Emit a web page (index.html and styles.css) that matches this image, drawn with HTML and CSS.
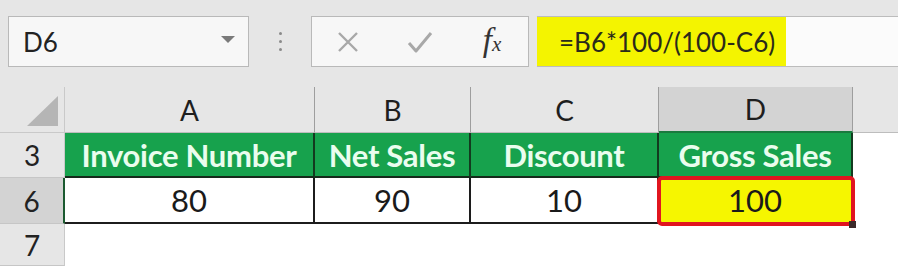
FILE: index.html
```html
<!DOCTYPE html>
<html lang="en">
<head>
  <meta charset="UTF-8">
  <title>Gross Sales</title>
  <link rel="stylesheet" href="styles.css">
</head>
<body>

<div class="toolbar">
  <div class="name-box">
    <span>D6</span>
    <svg class="caret" width="14" height="8" viewBox="0 0 14 8"><path d="M0 0 H14 L7 7 Z" fill="#7a7a7a"/></svg>
  </div>
  <div class="dots"><i></i><i></i><i></i></div>
  <div class="fx-box">
    <div class="fx-slot">
      <svg width="22" height="20" viewBox="0 0 22 20"><path d="M2 1 L20 19 M20 1 L2 19" stroke="#a8a8a8" stroke-width="2.4" fill="none"/></svg>
    </div>
    <div class="fx-slot">
      <svg width="26" height="22" viewBox="0 0 26 22"><path d="M2 12 L9 20 L24 2" stroke="#a8a8a8" stroke-width="3" fill="none" stroke-linejoin="round"/></svg>
    </div>
    <div class="fx-slot"><span class="fx"><i>f</i><small>x</small></span></div>
  </div>
  <div class="formula">
    <span class="formula-text">=B6*100/(100-C6)</span>
  </div>
</div>

<div class="sheet">
  <div class="corner"><svg width="31" height="30" viewBox="0 0 31 30"><path d="M31 0 V30 H0 Z" fill="#b5b5b5"/></svg></div>
  <div class="col-head">A</div>
  <div class="col-head">B</div>
  <div class="col-head">C</div>
  <div class="col-head selected">D</div>
  <div class="col-head blank"></div>

  <div class="row-head">3</div>
  <div class="cell title">Invoice Number</div>
  <div class="cell title">Net Sales</div>
  <div class="cell title">Discount</div>
  <div class="cell title">Gross Sales</div>
  <div class="cell empty"></div>

  <div class="row-head selected">6</div>
  <div class="cell value first">80</div>
  <div class="cell value">90</div>
  <div class="cell value">10</div>
  <div class="cell value active">100</div>
  <div class="cell empty"></div>

  <div class="row-head">7</div>
  <div class="cell empty"></div>
  <div class="cell empty"></div>
  <div class="cell empty"></div>
  <div class="cell empty"></div>
  <div class="cell empty"></div>
</div>

</body>
</html>
```

FILE: styles.css
```css
body {
  margin: 0;
  width: 898px;
  height: 266px;
  overflow: hidden;
  font-family: Lato, "Open Sans", sans-serif;
  color: #222;
  background-color: #fff;
}

.toolbar {
  height: 87px;
  background-color: #e6e6e6;
  display: flex;
  align-items: flex-start;
  padding: 16px 0 0 8px;
  box-sizing: border-box;
}

.name-box {
  width: 241px;
  height: 51px;
  box-sizing: border-box;
  background-color: #f7f7f7;
  border: 1px solid #b9b9b9;
  display: flex;
  align-items: center;
  justify-content: space-between;
  padding: 0 13px 0 14px;
  font-size: 26px;
}

.caret {
  margin-top: -4px;
}

.dots {
  width: 62px;
  height: 51px;
  display: flex;
  flex-direction: column;
  align-items: center;
  justify-content: center;
  gap: 5px;
}

.dots i {
  width: 3px;
  height: 3px;
  border-radius: 50%;
  background-color: #8a8a8a;
}

.fx-box {
  width: 218px;
  height: 51px;
  box-sizing: border-box;
  background-color: #f7f7f7;
  border: 1px solid #b9b9b9;
  display: flex;
}

.fx-slot {
  flex: 1;
  display: flex;
  align-items: center;
  justify-content: center;
}

.fx {
  font-family: "Liberation Serif", serif;
  font-style: italic;
  color: #333;
  font-size: 33px;
  margin-top: -2px;
}

.fx small {
  font-size: 21px;
  margin-left: 0;
}

.formula {
  flex: 1;
  height: 51px;
  margin-left: 8px;
  box-sizing: border-box;
  background-color: #fbfbfb;
  border-top: 1px solid #bcbcbc;
  border-bottom: 1px solid #bcbcbc;
  display: flex;
}

.formula-text {
  width: 249px;
  background-color: #f4f400;
  font-size: 26px;
  display: flex;
  align-items: center;
  padding-left: 22px;
  box-sizing: border-box;
  color: #2a2a1a;
}

.sheet {
  display: grid;
  grid-template-columns: 65px 250px 156px 188px 194px 1fr;
  grid-template-rows: 46px 45px 46px 1fr;
  height: 179px;
}

.corner {
  background-color: #e6e6e6;
  border-right: 1px solid #c9c9c9;
  border-bottom: 1px solid #c9c9c9;
  display: flex;
  align-items: flex-end;
  justify-content: flex-end;
  padding: 0 6px 6px 0;
}

.col-head {
  background-color: #e6e6e6;
  border-right: 1px solid #9e9e9e;
  border-bottom: 1px solid #bdbdbd;
  display: flex;
  align-items: center;
  justify-content: center;
  font-size: 28px;
  color: #1e1e1e;
}

.col-head.selected {
  background-color: #d3d3d3;
  border-bottom: 2px solid #1a7a3e;
}

.col-head.blank {
  border-right: none;
}

.row-head {
  background-color: #e6e6e6;
  border-right: 1px solid #c9c9c9;
  border-bottom: 1px solid #c6c6c6;
  display: flex;
  align-items: center;
  justify-content: center;
  font-size: 28px;
  color: #222;
}

.row-head.selected {
  background-color: #d3d3d3;
  border-right: 2px solid #1b5a30;
}

.cell {
  display: flex;
  align-items: center;
  justify-content: center;
}

.title {
  background-color: #17a24d;
  color: #eafdee;
  font-weight: bold;
  font-size: 31px;
  letter-spacing: -0.3px;
  border-right: 2px solid #133a1f;
  border-bottom: 2px solid #152a1a;
}

.value {
  font-size: 31px;
  color: #1a1a1a;
  border-right: 2px solid #1c1c1c;
  border-bottom: 2px solid #1c1c1c;
}

.value.active {
  position: relative;
  z-index: 1;
  background-color: #f6f600;
  outline: 4px solid #e1151f;
  outline-offset: -2px;
  border-radius: 3px;
  border-color: transparent;
}

.value.active::after {
  content: "";
  position: absolute;
  right: -5px;
  bottom: -6px;
  width: 7px;
  height: 7px;
  background-color: #3b2a2a;
}

.empty {
  background-color: #fff;
}
```
